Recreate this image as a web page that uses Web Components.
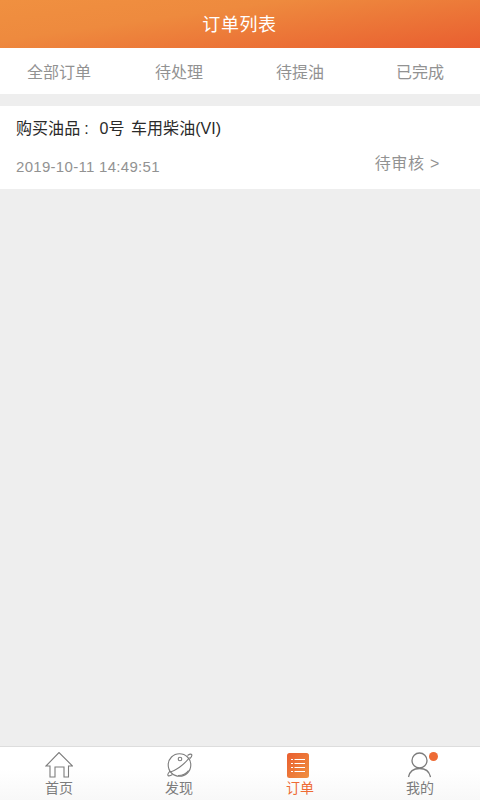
<!DOCTYPE html>
<html><head><meta charset="utf-8">
<style>
html,body{margin:0;padding:0;height:100%}
body{font-family:"Liberation Sans","Noto Sans CJK SC",sans-serif;background:#eee}
app-page{display:flex;flex-direction:column;height:800px;width:480px}
</style></head><body>
<app-page>
  <app-header>订单列表</app-header>
  <tab-bar>
    <span>全部订单</span><span>待处理</span><span>待提油</span><span>已完成</span>
  </tab-bar>
  <order-card product="购买油品" fuel="0号 车用柴油(VI)" time="2019-10-11 14:49:51" status="待审核 &gt;"></order-card>
  <nav-bar></nav-bar>
</app-page>
<script>
function def(name, html, init){
  customElements.define(name, class extends HTMLElement{
    constructor(){super();this.attachShadow({mode:'open'}).innerHTML=html;}
    connectedCallback(){ if(init) init(this); }
  });
}
def('app-header',`<style>
:host{display:flex;align-items:center;justify-content:center;height:48px;box-sizing:border-box;flex:none;
background:linear-gradient(172deg,#f09040 0%,#ee8a3e 35%,#e95e30 100%);color:#fff;font-size:18px;letter-spacing:.6px;padding-bottom:3px;padding-right:1px}
</style><slot></slot>`);
def('tab-bar',`<style>
:host{display:grid;grid-template-columns:repeat(4,1fr);height:46px;background:#fff;flex:none;margin-bottom:12px;
align-items:center;justify-items:center;color:#929292;font-size:16px}
::slotted(:nth-child(-n+2)){margin-right:2px}
</style><slot></slot>`);
def('order-card',`<style>
:host{display:block;background:#fff;height:83px;flex:none;box-sizing:border-box;padding:13px 16px 0}
.a{font-size:16px;color:#2a2a2a;line-height:20px;display:flex}
.a b{font-weight:normal;width:83.5px}
.a i{font-style:normal;margin-left:4px}
.a span{word-spacing:2px;letter-spacing:.05px}
.b{display:flex;justify-content:space-between;margin-top:14px;padding-right:24px}
.t{font-size:15px;color:#929292;line-height:20px;margin-top:4px;letter-spacing:.3px}
.s{font-size:16px;color:#929292;line-height:20px;margin-top:1px;letter-spacing:.6px;word-spacing:.5px}
</style><div class="a"><b><span id="p"></span><i>:</i></b><span id="f"></span></div>
<div class="b"><span class="t" id="t"></span><span class="s" id="s"></span></div>`,el=>{
  const r=el.shadowRoot;
  r.getElementById('p').textContent=el.getAttribute('product');
  r.getElementById('f').textContent=el.getAttribute('fuel');
  r.getElementById('t').textContent=el.getAttribute('time');
  r.getElementById('s').textContent=el.getAttribute('status');
});
def('nav-item',`<style>
:host{display:flex;flex-direction:column;align-items:center;color:#7c7c7c;font-size:14px;line-height:18px;position:relative}
:host([shift]){padding-right:2px}
:host([active]){color:#ee6b35}
.i{height:28px;margin-top:4px;display:flex;align-items:center;justify-content:center}
</style><div class="i"><slot name="icon"></slot></div><div class="l"><slot></slot></div>`);
def('nav-bar',`<style>
:host{display:grid;grid-template-columns:repeat(4,1fr);margin-top:auto;height:54px;box-sizing:border-box;flex:none;
border-top:1px solid #ddd;background:linear-gradient(#fff 40%,#f8f8f8)}
svg{display:block}
.order{margin-right:5px}
.me{margin-right:3px}
.dot{position:absolute;left:69px;top:5px;width:9px;height:9px;border-radius:50%;background:#ee6b35}
</style>
<nav-item shift><svg slot="icon" width="28" height="26" viewBox="0 0 28 26" fill="none" stroke="#7c7c7c" stroke-width="1.1"><path d="M1 14 14 .5 27.500 14H23.500V25H19V15H10V25H5V14z"/></svg>首页</nav-item>
<nav-item shift><svg slot="icon" width="28" height="26" viewBox="0 0 28 26" fill="none" stroke="#7c7c7c" stroke-width="1.1"><circle cx="14.500" cy="13" r="11.300"/><path d="M4.500 20C10 19 19 13 24.500 5.500M22.500 3.500c2-1.300 3.700-1.600 4.200-.9.500.8-.2 2.300-1.800 4M5 19c-1.800 2-2.600 3.800-2 4.500.7.700 2.500.3 4.500-1"/><path d="M13 23.500c4.500 0 8.500-2 10.500-5"/><circle cx="15" cy="7" r="1.800"/></svg>发现</nav-item>
<nav-item active><svg class="order" slot="icon" width="22" height="25" viewBox="0 0 22 25"><defs><linearGradient id="g" x1="0" y1="0" x2="1" y2="1"><stop offset="0" stop-color="#e95e30"/><stop offset="1" stop-color="#f09040"/></linearGradient></defs><rect width="22" height="25" rx="2.500" fill="url(#g)"/><path d="M7.500 6.500H18M7.500 10.500H18M7.500 14.500H18M7.500 18.500H18M4 6.500H6M4 10.500H6M4 14.500H6M4 18.500H6" stroke="#fff" stroke-width="1.200"/></svg>订单</nav-item>
<nav-item><svg class="me" slot="icon" width="24" height="26" viewBox="0 0 24 26" fill="none" stroke="#7c7c7c" stroke-width="1.3"><circle cx="12.500" cy="8.500" r="7.500"/><path d="M1.500 25c1-5 5-8.500 11-8.500s10 3.500 11 8.500"/></svg>我的<span class="dot"></span></nav-item>`);
</script>
</body></html>
